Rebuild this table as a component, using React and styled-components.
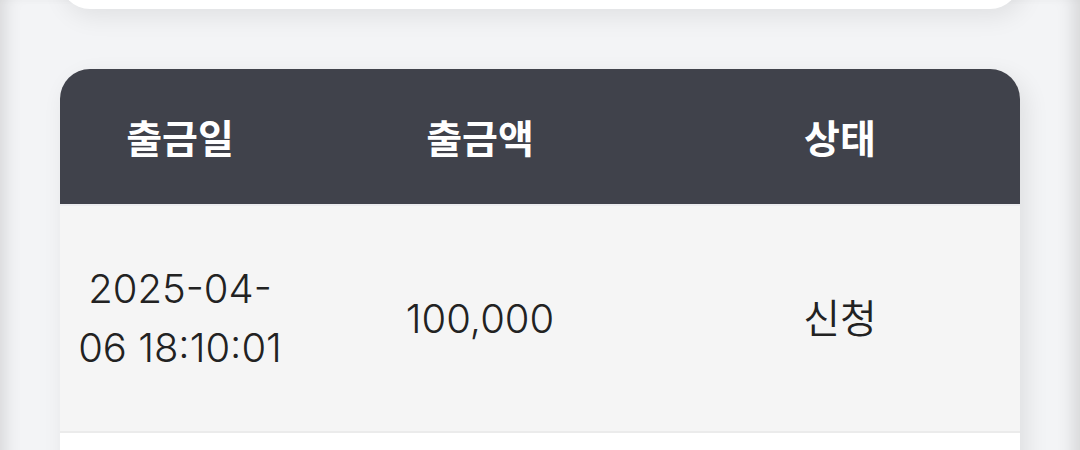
import React from "react";
import styled, { createGlobalStyle } from "styled-components";

const Global = createGlobalStyle`
  html, body { margin: 0; padding: 0; }
  body {
    background: #f3f4f6;
    font-family: Inter, "Noto Sans CJK KR", sans-serif;
    color: #222;
  }
`;

const Page = styled.div`
  min-height: 450px;
  padding: 0 60px;
  background: #f3f4f6;
  box-shadow: inset 16px 0 18px -12px rgba(0, 0, 0, 0.13),
    inset -18px 0 18px -12px rgba(0, 0, 0, 0.13);
  overflow: hidden;
  display: flex;
  flex-direction: column;
  gap: 60px;
`;

const SummaryCard = styled.section`
  height: 200px;
  margin-top: -191.5px;
  background: #fff;
  border-radius: 30px;
  box-shadow: 4px 8px 24px rgba(0, 0, 0, 0.08);
`;

const TableCard = styled.section`
  border-radius: 30px 30px 0 0;
  overflow: hidden;
  box-shadow: 6px 8px 24px rgba(0, 0, 0, 0.09);
`;

const Table = styled.table`
  width: 100%;
  border-collapse: collapse;
  table-layout: fixed;
`;

const HeadRow = styled.tr`
  background: #40424b;
  border-bottom: 2.7px solid #ececef;
`;

const HeadCell = styled.th`
  height: 135px;
  padding: 0 16px;
  color: #fff;
  font-size: 39px;
  font-weight: 700;
  text-align: center;
  vertical-align: middle;
`;

const Row = styled.tr`
  background: ${(p) => (p.$odd ? "#f5f5f5" : "#ffffff")};
  border-bottom: 2.7px solid #ebebeb;
`;

const Cell = styled.td`
  height: 225px;
  padding: 0 14px;
  font-size: 40px;
  line-height: 59px;
  font-weight: 350;
  color: #222;
  text-align: center;
  vertical-align: middle;
`;

const rows = [
  { date: "2025-04-06 18:10:01", amount: "100,000", status: "신청" },
  { date: "", amount: "", status: "" },
];

export default function App() {
  return (
    <>
      <Global />
      <Page>
        <SummaryCard />
        <TableCard>
          <Table>
            <colgroup>
              <col style={{ width: "25%" }} />
              <col style={{ width: "37.5%" }} />
              <col style={{ width: "37.5%" }} />
            </colgroup>
            <thead>
              <HeadRow>
                <HeadCell>출금일</HeadCell>
                <HeadCell>출금액</HeadCell>
                <HeadCell>상태</HeadCell>
              </HeadRow>
            </thead>
            <tbody>
              {rows.map((r, i) => (
                <Row key={i} $odd={i % 2 === 0}>
                  <Cell>{r.date}</Cell>
                  <Cell>{r.amount}</Cell>
                  <Cell>{r.status}</Cell>
                </Row>
              ))}
            </tbody>
          </Table>
        </TableCard>
      </Page>
    </>
  );
}
